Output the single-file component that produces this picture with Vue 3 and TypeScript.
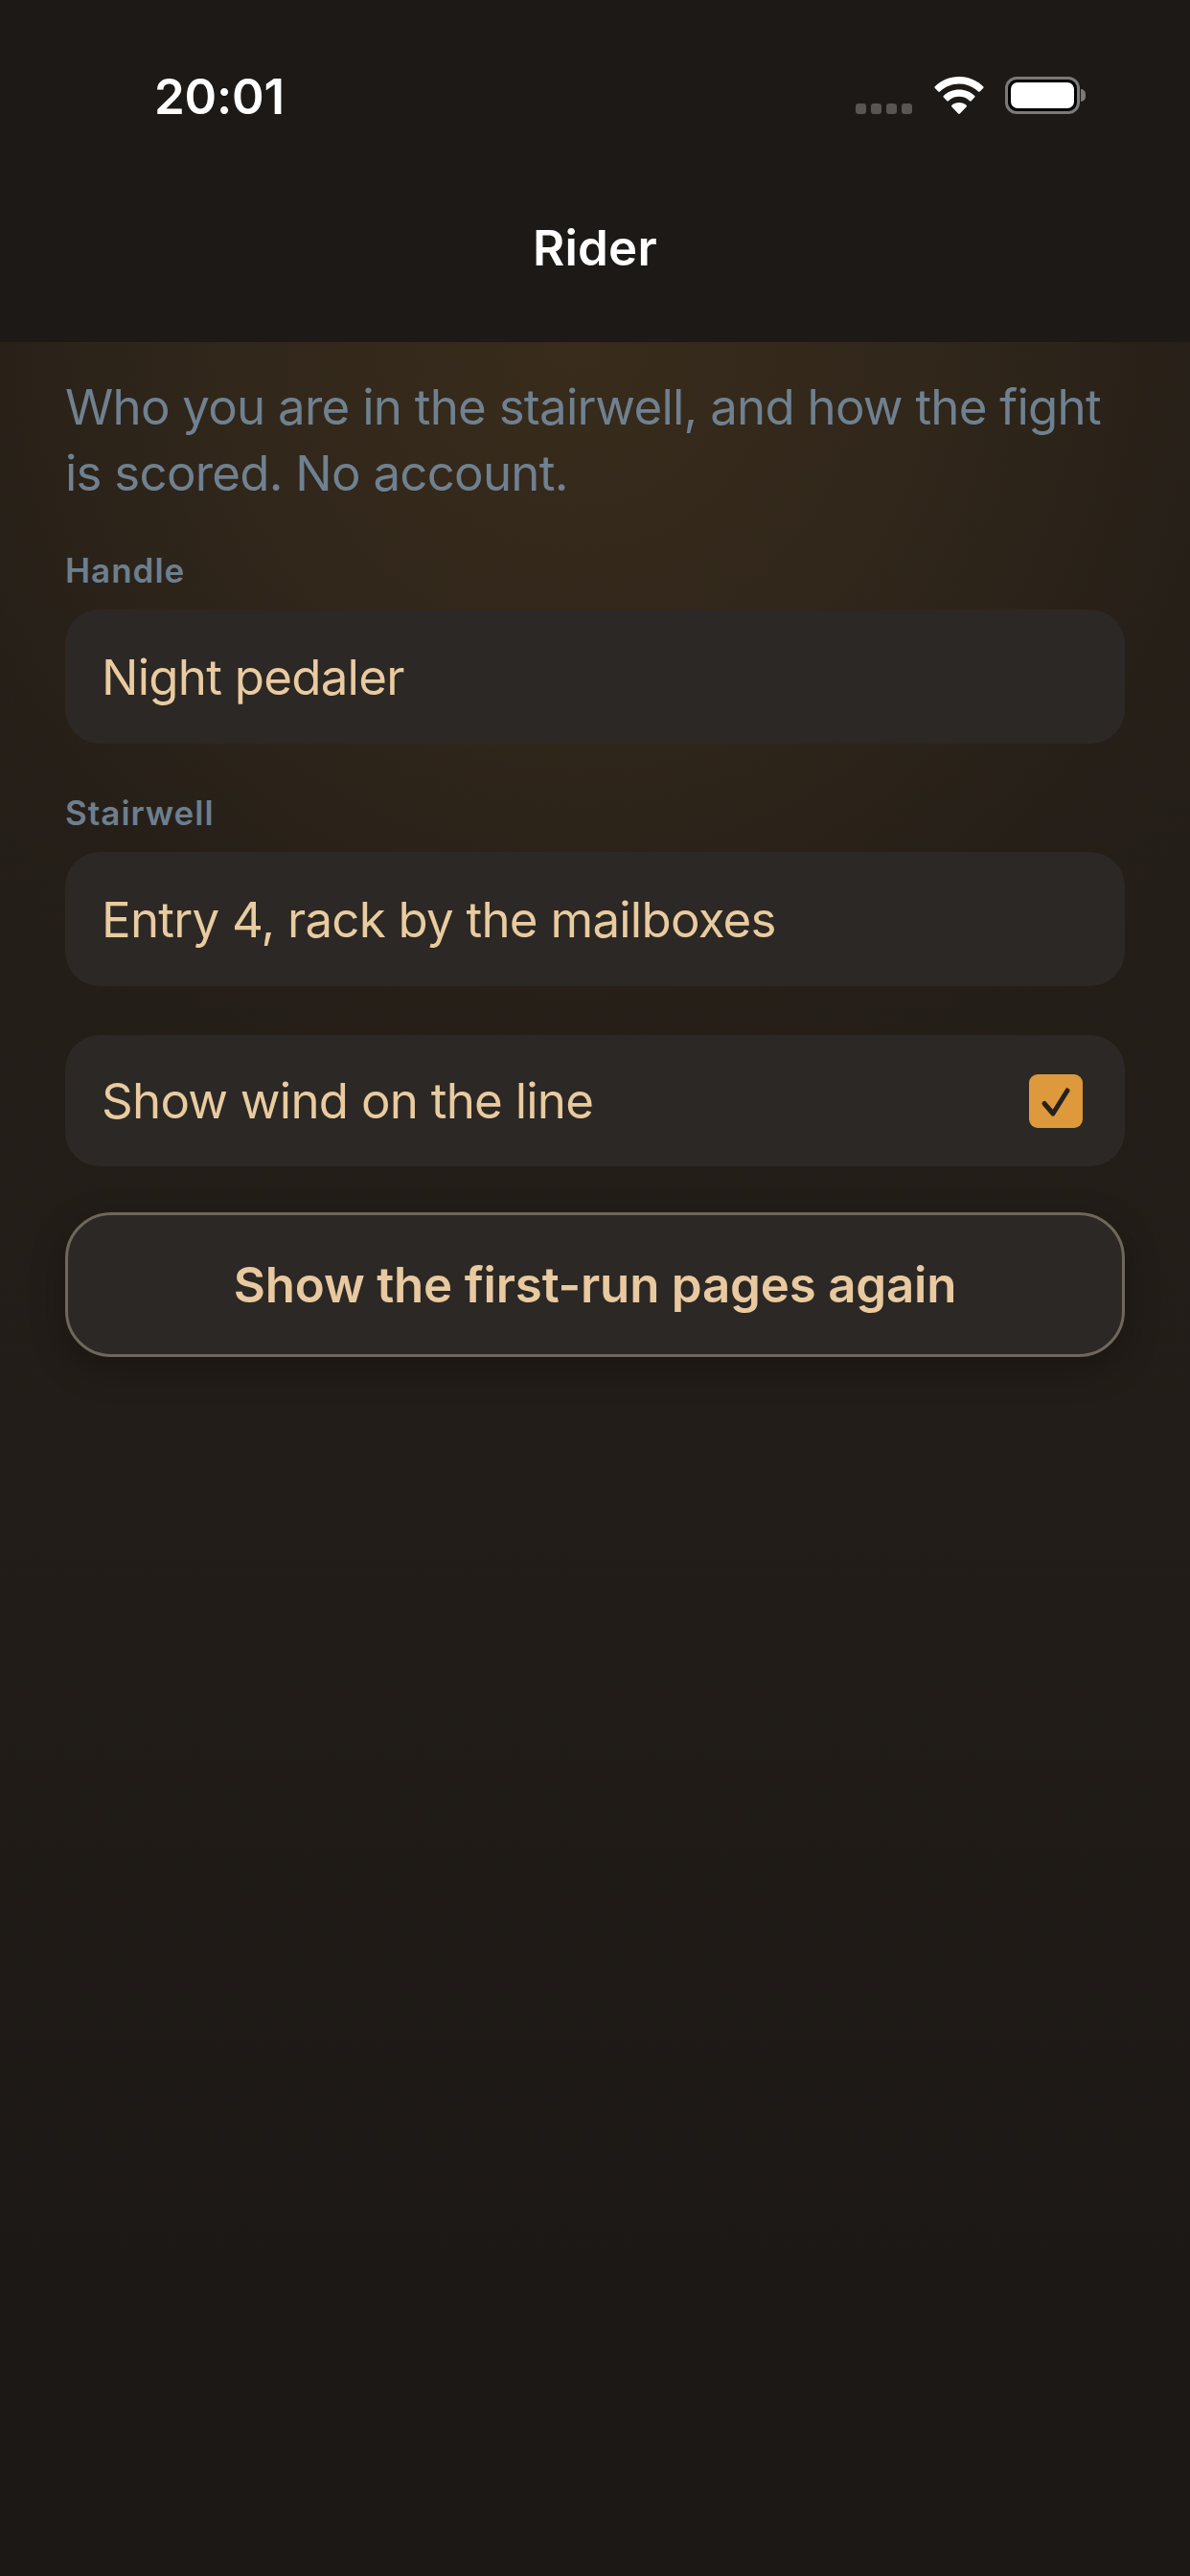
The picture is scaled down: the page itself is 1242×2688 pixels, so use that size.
<script setup lang="ts">
const signalDots: number[] = [0, 1, 2, 3]
</script>

<template>
  <div class="screen">
    <header class="top">
      <div class="status">
        <span class="time">20:01</span>
        <div class="status-icons">
          <div class="signal">
            <i v-for="d in signalDots" :key="d" class="dot"></i>
          </div>
          <svg class="wifi" viewBox="0 0 52 39" width="52" height="39">
            <path fill="#fff" d="M26 0C16 0 7.2 3.9 .8 10.2c-.5.5-.5 1.2 0 1.7l3.5 3.7c.5.5 1.2.5 1.7 0C11.200 10.500 18.200 7.500 26 7.500s14.800 3 20 8.100c.5.5 1.200.5 1.700 0l3.500-3.700c.5-.5.5-1.200 0-1.700C44.800 3.900 36 0 26 0Z"/>
            <path fill="#fff" d="M26 13.500c-6.300 0-12 2.400-16.200 6.400-.5.5-.5 1.200 0 1.700l3.500 3.700c.5.500 1.200.500 1.700 0C18 22 21.800 20.700 26 20.700s8 1.300 11 4.600c.5.500 1.200.500 1.700 0l3.500-3.700c.5-.5.5-1.200 0-1.700C38 15.900 32.300 13.500 26 13.500Z"/>
            <path fill="#fff" d="M26 27c-2.900 0-5.600 1-7.600 2.800-.5.5-.5 1.200 0 1.700l6.700 7c.5.500 1.300.500 1.800 0l6.700-7c.5-.5.5-1.200 0-1.700C31.600 28 28.900 27 26 27Z"/>
          </svg>
          <div class="battery">
            <div class="battery-body"><div class="battery-fill"></div></div>
            <div class="battery-nub"></div>
          </div>
        </div>
      </div>
      <h1 class="title">Rider</h1>
    </header>

    <main class="content">
      <p class="intro">Who you are in the stairwell, and how the fight is scored. No account.</p>

      <div class="label">Handle</div>
      <div class="field">Night pedaler</div>

      <div class="label second">Stairwell</div>
      <div class="field">Entry 4, rack by the mailboxes</div>

      <div class="field toggle">
        <span>Show wind on the line</span>
        <span class="check">
          <svg viewBox="0 0 56 56" width="56" height="56">
            <path d="M16 30.500 25 41 40 17" fill="none" stroke="#25211d" stroke-width="5" stroke-linecap="round" stroke-linejoin="round"/>
          </svg>
        </span>
      </div>

      <button class="again" type="button">Show the first-run pages again</button>
    </main>
  </div>
</template>

<style>
html, body { margin: 0; background: #1c1815; }
</style>

<style scoped>
.screen {
  width: 1242px;
  height: 2688px;
  display: flex;
  flex-direction: column;
  overflow: hidden;
  background: #1c1815;
  font-family: Inter, "Liberation Sans", sans-serif;
}
.top {
  height: 357px;
  flex: none;
  display: flex;
  flex-direction: column;
  background: #1c1916;
}
.status {
  height: 196px;
  flex: none;
  box-sizing: border-box;
  padding: 70px 109px 0 161px;
  display: flex;
  justify-content: space-between;
  align-items: flex-start;
}
.time {
  color: #fff;
  font-size: 51px;
  font-weight: 600;
  line-height: 62px;
  letter-spacing: -0.2px;
}
.status-icons {
  display: flex;
  align-items: flex-start;
  padding-top: 10px;
}
.signal {
  display: flex;
  gap: 5px;
  margin-top: 28px;
  margin-right: 23px;
}
.dot {
  width: 11px;
  height: 11px;
  border-radius: 3px;
  background: #585654;
}
.wifi { margin-right: 22px; }
.battery {
  display: flex;
  align-items: center;
}
.battery-body {
  box-sizing: border-box;
  width: 78px;
  height: 39px;
  border: 3px solid #7c7a77;
  border-radius: 12px;
  padding: 3px;
  background: #000;
}
.battery-fill {
  width: 100%;
  height: 100%;
  border-radius: 7px;
  background: #fff;
}
.battery-nub {
  width: 5px;
  height: 13px;
  margin-left: 1px;
  border-radius: 0 6px 6px 0;
  background: #7c7a77;
}
.title {
  margin: 0;
  text-align: center;
  color: #fff;
  font-size: 51px;
  font-weight: 600;
  line-height: 62px;
  margin-top: 32px;
  letter-spacing: 0.2px;
}
.content {
  flex: 1;
  box-sizing: border-box;
  padding: 34px 68px 0;
  display: flex;
  flex-direction: column;
  background:
    radial-gradient(ellipse 860px 900px at 600px 0, rgba(60, 46, 28, 0.85) 0%, rgba(58, 45, 28, 0.55) 45%, rgba(50, 38, 25, 0.2) 78%, rgba(40, 31, 23, 0) 100%),
    linear-gradient(#241e18 0, #221d18 1200px, #1c1815 2000px);
}
.intro {
  margin: 0 0 47px;
  color: #6f8190;
  font-size: 51px;
  line-height: 68.5px;
  letter-spacing: -0.75px;
  font-weight: 375;
}
.label {
  color: #6d7f8e;
  font-size: 35px;
  font-weight: 600;
  line-height: 41px;
  letter-spacing: 1px;
  margin-bottom: 20px;
}
.label.second { margin-top: 52px; }
.field {
  box-sizing: border-box;
  height: 140px;
  padding: 0 38px;
  display: flex;
  align-items: center;
  border-radius: 36px;
  background: #2c2825;
  color: #e9cba0;
  font-size: 51px;
  letter-spacing: -0.75px;
  font-weight: 380;
}
.toggle {
  margin-top: 51px;
  height: 137px;
  justify-content: space-between;
  padding-right: 44px;
}
.check {
  width: 56px;
  height: 56px;
  border-radius: 9px;
  background: #de993c;
  display: flex;
}
.again {
  margin-top: 48px;
  height: 151px;
  flex: none;
  width: 100%;
  box-sizing: border-box;
  border: 3px solid #6f675c;
  border-radius: 48px;
  background: #2c2825;
  color: #e8c9a0;
  font-family: inherit;
  font-size: 51px;
  font-weight: 600;
  letter-spacing: -0.2px;
  box-shadow: 0 12px 36px rgba(0, 0, 0, 0.28);
}
</style>
